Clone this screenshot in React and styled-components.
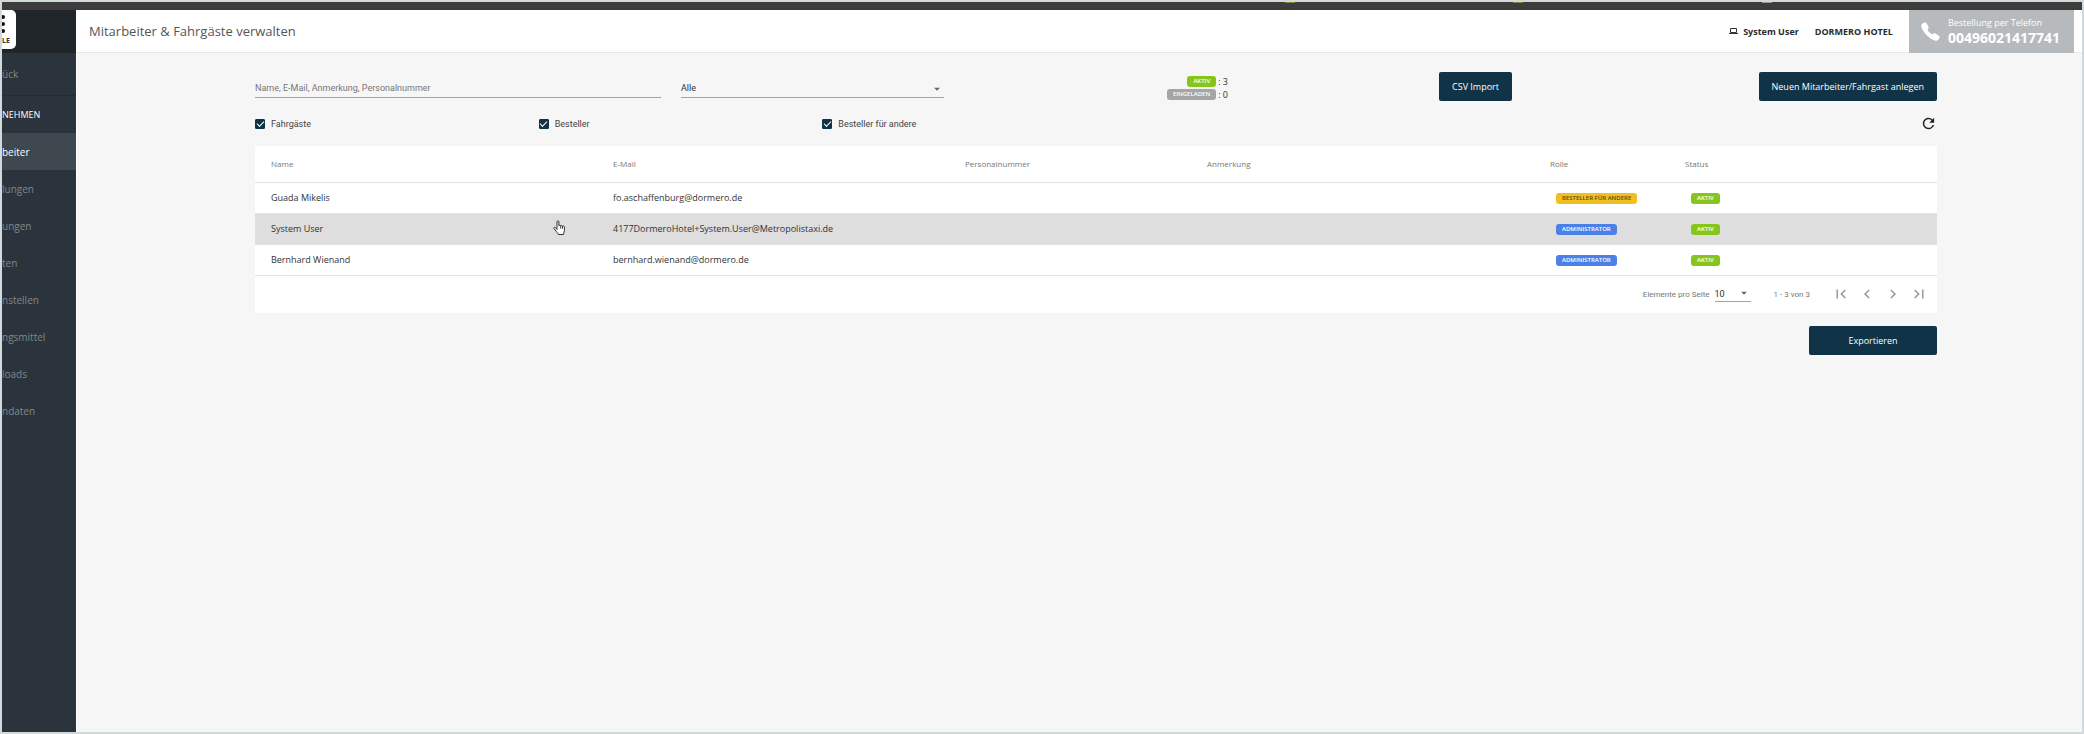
import React, { useState } from 'react';
import styled, { createGlobalStyle } from 'styled-components';
import {
  MdArrowDropDown,
  MdChevronLeft,
  MdChevronRight,
  MdFirstPage,
  MdLastPage,
  MdRefresh,
} from 'react-icons/md';
import { IoCall } from 'react-icons/io5';

const navItems = [
  { label: 'beiter', active: true },
  { label: 'lungen' },
  { label: 'ungen' },
  { label: 'ten' },
  { label: 'nstellen' },
  { label: 'ngsmittel' },
  { label: 'loads' },
  { label: 'ndaten' },
];

const columns = [
  { label: 'Name', width: 342 },
  { label: 'E-Mail', width: 352 },
  { label: 'Personalnummer', width: 242 },
  { label: 'Anmerkung', width: 343 },
  { label: 'Rolle', width: 135 },
  { label: 'Status', width: 268 },
];

const users = [
  {
    name: 'Guada Mikelis',
    email: 'fo.aschaffenburg@dormero.de',
    role: 'Besteller für andere',
    color: 'yellow',
  },
  {
    name: 'System User',
    email: '4177DormeroHotel+System.User@Metropolistaxi.de',
    role: 'Administrator',
    color: 'blue',
    hovered: true,
  },
  {
    name: 'Bernhard Wienand',
    email: 'bernhard.wienand@dormero.de',
    role: 'Administrator',
    color: 'blue',
  },
];

const badgeColors = {
  green: '#86c61c',
  gray: '#a5a5a5',
  yellow: '#efc020',
  blue: '#4a80e8',
};

const RoleCheckbox = ({ id, label }) => {
  const [checked, setChecked] = useState(true);

  return (
    <CheckLabel htmlFor={id}>
      <CheckInput
        id={id}
        type="checkbox"
        checked={checked}
        onChange={() => setChecked(!checked)}
      />
      {label}
    </CheckLabel>
  );
};

const App = () => {
  const [search, setSearch] = useState('');

  return (
    <Page>
      <GlobalStyle />
      <TopBar />
      <Body>
        <Sidebar>
          <LogoArea>
            <Logo>
              <svg width="4" height="19" viewBox="0 0 4 19" fill="#111">
                <circle cx="1" cy="2" r="2" />
                <circle cx="1" cy="9" r="2" />
                <circle cx="1" cy="16" r="2" />
              </svg>
              <span>LE</span>
            </Logo>
          </LogoArea>
          <BackLink href="#back">ück</BackLink>
          <NavTitle>NEHMEN</NavTitle>
          {navItems.map(({ label, active }) => (
            <NavLink key={label} href={`#${label}`} $active={active}>
              {label}
            </NavLink>
          ))}
        </Sidebar>
        <Main>
          <Header>
            <Title>Mitarbeiter &amp; Fahrgäste verwalten</Title>
            <Account href="#account">
              <svg width="9" height="8" viewBox="0 0 9 8" fill="none" stroke="#333">
                <path d="M1.5 1.5h6v4h-6z" />
                <path d="M0 6.500h9" />
              </svg>
              System User
            </Account>
            <Account href="#company">DORMERO HOTEL</Account>
            <Phone href="tel:00496021417741">
              <IoCall size={21} />
              <div>
                <PhoneLabel>Bestellung per Telefon</PhoneLabel>
                <PhoneNumber>00496021417741</PhoneNumber>
              </div>
            </Phone>
          </Header>
          <Content>
            <Filters>
              <SearchInput
                type="text"
                name="search"
                aria-label="Suche"
                placeholder="Name, E-Mail, Anmerkung, Personalnummer"
                value={search}
                onChange={e => setSearch(e.target.value)}
              />
              <SelectWrap>
                <Select name="status" aria-label="Status">
                  <option>Alle</option>
                </Select>
                <MdArrowDropDown size={14} />
              </SelectWrap>
              <Counts>
                <Badge $color="green">Aktiv</Badge>
                <span>: 3</span>
                <Badge $color="gray">Eingeladen</Badge>
                <span>: 0</span>
              </Counts>
              <Button type="button">CSV Import</Button>
              <Button type="button">Neuen Mitarbeiter/Fahrgast anlegen</Button>
            </Filters>
            <Roles>
              <RoleCheckbox id="passengers" label="Fahrgäste" />
              <RoleCheckbox id="orderers" label="Besteller" />
              <RoleCheckbox id="orderersForOthers" label="Besteller für andere" />
              <RefreshButton type="button" aria-label="Aktualisieren">
                <MdRefresh size={17} />
              </RefreshButton>
            </Roles>
            <Card>
              <Table>
                <colgroup>
                  {columns.map(({ label, width }) => (
                    <Col key={label} $width={width} />
                  ))}
                </colgroup>
                <thead>
                  <tr>
                    {columns.map(({ label }) => (
                      <Th key={label}>{label}</Th>
                    ))}
                  </tr>
                </thead>
                <tbody>
                  {users.map(({ name, email, role, color, hovered }) => (
                    <Row key={name} $hovered={hovered}>
                      <Td>{name}</Td>
                      <Td>{email}</Td>
                      <Td />
                      <Td />
                      <Td $badge>
                        <Badge $color={color}>{role}</Badge>
                      </Td>
                      <Td $badge>
                        <Badge $color="green">Aktiv</Badge>
                      </Td>
                    </Row>
                  ))}
                </tbody>
              </Table>
              <Pagination>
                <label htmlFor="pageSize">Elemente pro Seite</label>
                <SelectWrap $small>
                  <Select id="pageSize" $small>
                    <option>10</option>
                  </Select>
                  <MdArrowDropDown size={14} />
                </SelectWrap>
                <Range>1 - 3 von 3</Range>
                <PageButton type="button" aria-label="Erste Seite">
                  <MdFirstPage size={18} />
                </PageButton>
                <PageButton type="button" aria-label="Vorherige Seite">
                  <MdChevronLeft size={18} />
                </PageButton>
                <PageButton type="button" aria-label="Nächste Seite">
                  <MdChevronRight size={18} />
                </PageButton>
                <PageButton type="button" aria-label="Letzte Seite">
                  <MdLastPage size={18} />
                </PageButton>
              </Pagination>
            </Card>
            <Actions>
              <Button type="button" $wide>
                Exportieren
              </Button>
            </Actions>
          </Content>
        </Main>
      </Body>
      <Pointer width="13" height="16" viewBox="0 0 13 16">
        <path
          d="M4 9.5V1.8c0-1.4 1.9-1.4 1.9 0v4c.2-.9 1.7-.8 1.8.2.3-.8 1.7-.7 1.8.3.4-.8 1.9-.5 1.9.6v3.600c0 1.500-.9 2.200-.9 4H5.200c0-1.300-1.500-2.200-2.200-3.400L1 8.600c-.6-1.100.7-1.900 1.500-1z"
          fill="#fff"
          stroke="#333"
        />
        <path d="M7.700 6v2.500M9.500 6.300v2.400" stroke="#333" />
      </Pointer>
    </Page>
  );
};

export default App;

const GlobalStyle = createGlobalStyle`
  * {
    box-sizing: border-box;
  }

  body {
    margin: 0;
    font-family: 'Open Sans', 'Noto Sans', sans-serif;
    font-size: 9px;
    color: #333;
  }

  a {
    text-decoration: none;
  }
`;

const Page = styled.div`
  position: relative;
  display: flex;
  flex-direction: column;
  min-height: 100vh;
  border: 2px solid #d2d9da;
  background-color: #f6f6f6;
`;

const TopBar = styled.div`
  height: 8px;
  background: linear-gradient(#85852f, #85852f) 62% 0 / 10px 1px no-repeat,
    linear-gradient(#85852f, #85852f) 73% 0 / 10px 1px no-repeat,
    linear-gradient(#999, #999) 85% 0 / 10px 1px no-repeat, #3c3c3c;
`;

const Body = styled.div`
  display: flex;
  flex: 1;
`;

const Sidebar = styled.nav`
  width: 75px;
  flex-shrink: 0;
  overflow: hidden;
  border-right: 1px solid #fff;
  background-color: #2b343c;
  font-size: 10px;
`;

const LogoArea = styled.div`
  height: 43px;
  background-color: #1f2529;
`;

const Logo = styled.div`
  display: flex;
  flex-direction: column;
  justify-content: space-between;
  width: 14px;
  height: 39px;
  padding: 5px 0 4px;
  border-radius: 0 5px 5px 0;
  background-color: #fff;
  color: #333;
  font-size: 7px;
  font-weight: 700;
  line-height: 8px;
`;

const NavLink = styled.a`
  display: flex;
  align-items: center;
  height: 37px;
  color: ${({ $active }) => ($active ? '#fff' : '#81878b')};
  background-color: ${({ $active }) => ($active ? '#40484f' : 'transparent')};
`;

const BackLink = styled(NavLink)`
  height: 43px;
  border-bottom: 1px solid #242c33;
`;

const NavTitle = styled.div`
  display: flex;
  align-items: center;
  height: 37px;
  color: #fff;
  font-size: 9px;
`;

const Main = styled.main`
  flex: 1;
  min-width: 0;
`;

const Header = styled.header`
  display: flex;
  align-items: center;
  gap: 16px;
  height: 43px;
  padding: 0 8px 0 12px;
  border-bottom: 1px solid #e8e8e8;
  background-color: #fff;
`;

const Title = styled.h1`
  flex: 1;
  margin: 0;
  color: #555;
  font-size: 13px;
  font-weight: 400;
`;

const Account = styled.a`
  display: flex;
  align-items: center;
  gap: 5px;
  color: #2b2b2b;
  font-weight: 700;
`;

const Phone = styled.a`
  display: flex;
  align-items: center;
  gap: 7px;
  height: 43px;
  padding: 0 14px 0 11px;
  background-color: #b7babd;
  color: #fff;
`;

const PhoneLabel = styled.div`
  line-height: 13px;
`;

const PhoneNumber = styled.div`
  font-size: 14px;
  font-weight: 700;
  line-height: 17px;
`;

const Content = styled.div`
  padding: 19px 145px 20px 178px;
`;

const Filters = styled.div`
  display: grid;
  grid-template-columns: 406fr 263fr 264fr 264fr 405fr;
  align-items: start;
  column-gap: 20px;
`;

const SearchInput = styled.input`
  height: 26px;
  padding: 6px 0 0;
  border: 0;
  border-bottom: 1px solid #a3a3a3;
  border-radius: 0;
  outline: none;
  background: transparent;
  color: #333;
  font-family: Roboto, sans-serif;
  font-size: 9px;

  &::placeholder {
    color: #777;
  }
`;

const SelectWrap = styled.div`
  position: relative;
  width: ${({ $small }) => ($small ? '36px' : 'auto')};

  svg {
    position: absolute;
    right: 0;
    bottom: 2px;
    color: #666;
    pointer-events: none;
  }
`;

const Select = styled.select`
  display: block;
  width: 100%;
  height: ${({ $small }) => ($small ? '16px' : '26px')};
  padding: ${({ $small }) => ($small ? '0' : '6px 0 0')};
  border: 0;
  border-bottom: 1px solid #a3a3a3;
  border-radius: 0;
  outline: none;
  appearance: none;
  background: transparent;
  color: #333;
  font-family: Roboto, sans-serif;
  font-size: 9px;
`;

const Counts = styled.div`
  display: grid;
  grid-template-columns: auto auto;
  align-items: center;
  justify-content: end;
  justify-items: end;
  gap: 2px;
  padding-top: 4px;
  line-height: 11px;
`;

const Badge = styled.span`
  display: inline-block;
  padding: 0 6px;
  border-radius: 3px;
  background-color: ${({ $color }) => badgeColors[$color]};
  color: ${({ $color }) => ($color === 'yellow' ? '#5c4a10' : '#fff')};
  font-size: 6px;
  font-weight: 600;
  line-height: 11px;
  text-transform: uppercase;
  vertical-align: middle;
`;

const Button = styled.button`
  justify-self: end;
  width: ${({ $wide }) => ($wide ? '128px' : 'auto')};
  height: 29px;
  padding: 0 13px;
  border: 0;
  border-radius: 2px;
  background-color: #103347;
  color: #fff;
  font-family: inherit;
  font-size: 9px;
  font-weight: 500;
  cursor: pointer;
`;

const Roles = styled.div`
  display: grid;
  grid-template-columns: repeat(6, 1fr);
  align-items: center;
  column-gap: 20px;
  height: 45px;
`;

const CheckLabel = styled.label`
  display: flex;
  align-items: center;
  gap: 6px;
  color: #444;
  font-family: Roboto, sans-serif;
`;

const CheckInput = styled.input`
  display: grid;
  place-items: center;
  width: 10px;
  height: 10px;
  margin: 0;
  appearance: none;
  border: 1px solid #103347;
  border-radius: 1px;

  &:checked {
    background-color: #103347;
  }

  &:checked::before {
    content: '';
    width: 6px;
    height: 3px;
    border: solid #fff;
    border-width: 0 0 1px 1px;
    transform: translateY(-1px) rotate(-45deg);
  }
`;

const RefreshButton = styled.button`
  display: flex;
  grid-column: 6;
  justify-self: end;
  padding: 0;
  border: 0;
  background: none;
  color: #222;
  cursor: pointer;
`;

const Card = styled.section`
  background-color: #fff;
`;

const Table = styled.table`
  width: 100%;
  border-collapse: collapse;
  table-layout: fixed;
`;

const Col = styled.col`
  width: ${({ $width }) => $width}px;
`;

const Th = styled.th`
  height: 36px;
  padding: 0 0 0 16px;
  border-bottom: 1px solid #e2e2e2;
  color: #777;
  font-size: 8px;
  font-weight: 400;
  text-align: left;
`;

const Row = styled.tr`
  background-color: ${({ $hovered }) => ($hovered ? '#dedede' : '#fff')};
  cursor: pointer;
`;

const Td = styled.td`
  height: 31px;
  padding: 0 0 0 ${({ $badge }) => ($badge ? '22px' : '16px')};
  border-bottom: 1px solid #e2e2e2;
  white-space: nowrap;
`;

const Pagination = styled.div`
  display: flex;
  align-items: center;
  justify-content: flex-end;
  gap: 5px;
  height: 37px;
  padding-right: 8px;
  color: #777;
  font-family: Roboto, sans-serif;
  font-size: 8px;
`;

const Range = styled.span`
  margin: 0 15px 0 18px;
`;

const PageButton = styled.button`
  display: flex;
  justify-content: center;
  width: 21px;
  padding: 0;
  border: 0;
  background: none;
  color: #999;
  cursor: pointer;
`;

const Actions = styled.div`
  display: flex;
  justify-content: flex-end;
  margin-top: 13px;
`;

// Hand cursor resting on the hovered row
const Pointer = styled.svg`
  position: absolute;
  top: 218px;
  left: 551px;
  fill: none;
  pointer-events: none;
`;
